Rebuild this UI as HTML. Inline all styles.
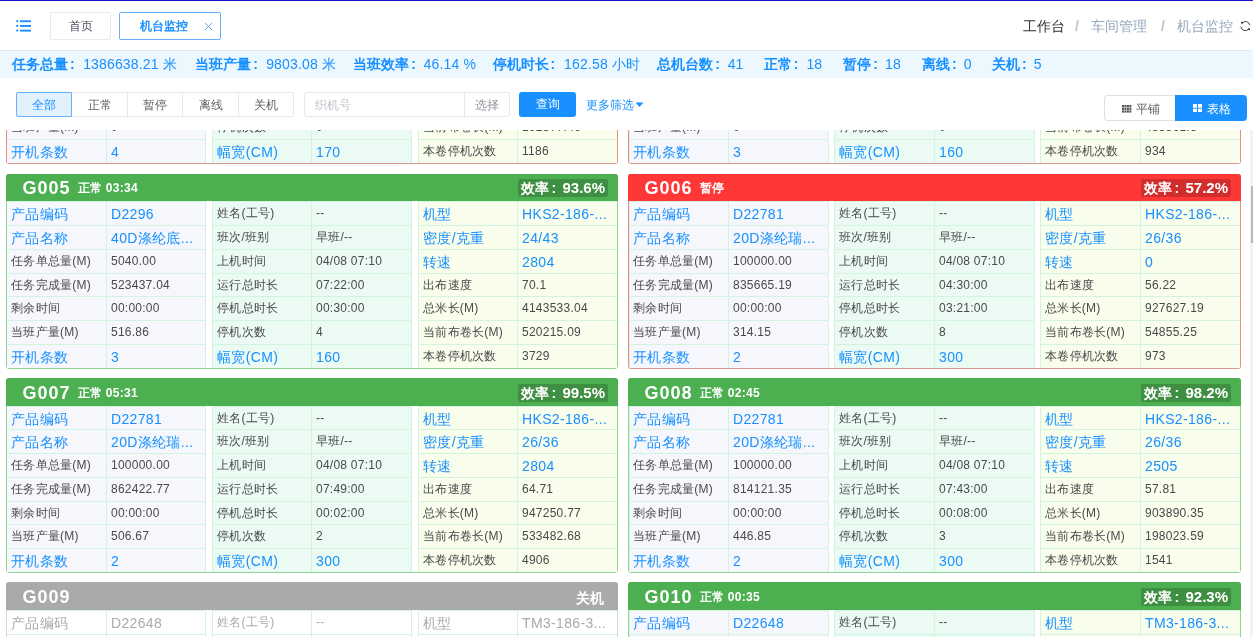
<!DOCTYPE html>
<html><head><meta charset="utf-8"><style>
*{margin:0;padding:0;box-sizing:border-box}
html,body{width:1253px;height:637px;overflow:hidden;background:#fff;font-family:"Liberation Sans",sans-serif;color:#333}
.abs{position:absolute}
.topline{position:absolute;left:0;top:0;width:1253px;height:1px;background:#1a0fd4}
.ham{position:absolute;left:16px;top:19.6px}
.tab{position:absolute;top:12px;height:28px;border:1px solid #e8eaef;border-radius:2px;font-size:12px;line-height:26px;color:#495060;text-align:center}
.tab.t1{left:50px;width:61px}
.tab.t2{left:119px;width:102px;border-color:#64b1ff;color:#1890ff;font-weight:bold;text-align:left;padding-left:20px}
.tab.t2 .x{position:absolute;left:84px;top:9px}
.bc{position:absolute;top:18px;font-size:14px;line-height:16px;white-space:nowrap}
.info{position:absolute;left:0;top:50px;width:1253px;height:28px;border-top:1px solid #e4e7ed;background:#ecf7fe;font-size:14px;line-height:27px;color:#1890ff;white-space:nowrap}
.info span{position:absolute;top:0;letter-spacing:.15px}
.info b{position:absolute;top:0;font-weight:bold}
.info .cl{display:inline-block;width:15px;font-style:normal;padding-left:2px}
.fb{position:absolute;top:92px;height:25px;border:1px solid #e4e7ed;font-size:12px;line-height:25.2px;text-align:center;color:#606266;background:#fff}
.fb.on{background:#e3f0fd;border-color:#64b1ff;color:#1890ff;z-index:2}
.inp{position:absolute;left:304px;top:92px;width:206px;height:25px;border:1px solid #e4e7ed;border-radius:3px;background:#fff;font-size:12px;line-height:25px;color:#c0c4cc}
.btnq{position:absolute;left:519px;top:92px;width:57px;height:25px;border-radius:3px;background:#1890ff;color:#fff;font-size:12px;line-height:25.5px;text-align:center}
.more{position:absolute;left:586px;top:92px;font-size:12px;line-height:26px;color:#1890ff}
.vt{position:absolute;top:95px;height:26px;font-size:12px;line-height:24px;text-align:center}
.content{position:absolute;left:0;top:130px;width:1253px;height:507px;overflow:hidden;will-change:transform}
.sb{position:absolute;left:1250px;top:130px;width:3px;height:507px;background:#f3f3f3}
.sbt{position:absolute;left:1251px;top:186px;width:2px;height:57px;background:#b8b8b8}
.card{position:absolute;border:1px solid #8fd694;border-radius:3px}
.card.red{border-color:#f08a85;border-bottom-color:#d99a8c}
.card.gray{border-color:#d6d6d6}
.hd{position:absolute;left:-1px;top:-1px;right:-1px;background:#4caf50;color:#fff;border-radius:3px 3px 0 0;display:flex;align-items:center;padding-top:1px;white-space:nowrap}
.red .hd{background:#ff3737}
.gray .hd{background:#aaaaaa}
.gid{margin-left:16.5px;font-size:18px;line-height:20px;font-weight:bold;letter-spacing:1px}
.st{margin-left:7px;font-size:12px;line-height:16px;font-weight:bold;letter-spacing:.3px}
.eff{margin-left:auto;margin-right:10px;height:18px;padding:0 3px 0 3.5px;background:rgba(0,0,0,.18);border-radius:2px;font-size:14px;line-height:18px;font-weight:bold}
.rst{margin-left:auto;margin-right:14.5px;font-size:14px;line-height:17px;font-weight:bold;position:relative;top:2px}
.gb{position:absolute}
.g0{background:#f5f7fc}
.g1{background:#ebfbf3}
.g2{background:#f8fdec}
.gray .gb{background:#fff}
.vl{position:absolute;width:1px;background:#d3f3e1}
.hl{position:absolute;height:1px;background:#d3f3e1}
.tx{position:absolute;white-space:nowrap;font-size:12px;color:#4a4a4a;letter-spacing:.25px}
.tx.big{font-size:14px;color:#1890ff;letter-spacing:.35px}
.gray .tx,.gray .tx.big{color:#aaa}
.eff .cl{display:inline-block;width:13px;font-style:normal;padding-left:2px}
.eff b{font-size:15px}

.root{position:absolute;left:0;top:0;width:1253px;height:637px;overflow:hidden;will-change:transform;background:#fff}

</style></head><body><div class="root">
<div class="topline"></div>
<svg class="ham" width="16" height="13" viewBox="0 0 16 13"><g fill="#1890ff"><circle cx="1.2" cy="1.2" r="1.1"/><circle cx="1.2" cy="5.9" r="1.1"/><circle cx="1.2" cy="10.6" r="1.1"/><rect x="4" y="0.3" width="11" height="1.9"/><rect x="4" y="5" width="11" height="1.9"/><rect x="4" y="9.7" width="11" height="1.9"/></g></svg>
<div class="tab t1">首页</div>
<div class="tab t2">机台监控<svg class="x" width="9" height="9" viewBox="0 0 9 9"><path d="M1 1L8 8M8 1L1 8" stroke="#4da3ff" stroke-width="0.9"/></svg></div>
<div class="bc" style="left:1023px;color:#303133">工作台</div>
<div class="bc" style="left:1075px;color:#c0c4cc;font-weight:bold">/</div>
<div class="bc" style="left:1091px;color:#97a8be">车间管理</div>
<div class="bc" style="left:1161px;color:#c0c4cc;font-weight:bold">/</div>
<div class="bc" style="left:1177px;color:#97a8be">机台监控</div>
<svg class="abs" style="left:1240px;top:21px" width="11" height="10" viewBox="0 0 11 10"><path d="M2.3 1.8A4.5 4.5 0 0 1 9.9 4.2" fill="none" stroke="#444" stroke-width="1"/><path d="M0.9 5.6A4.5 4.5 0 0 0 8.7 8.2" fill="none" stroke="#444" stroke-width="1"/><path d="M0.8 0.8L3.6 1.2L1.8 3.4Z M10.2 9.2L7.4 8.8L9.2 6.6Z" fill="#333"/></svg>
<div class="info"><b style="left:12.0px">任务总量<i class="cl">:</i></b><span style="left:83.2px">1386638.21 米</span><b style="left:195.3px">当班产量<i class="cl">:</i></b><span style="left:266.2px">9803.08 米</span><b style="left:353.3px">当班效率<i class="cl">:</i></b><span style="left:423.6px">46.14 %</span><b style="left:492.6px">停机时长<i class="cl">:</i></b><span style="left:564.1px">162.58 小时</span><b style="left:657.3px">总机台数<i class="cl">:</i></b><span style="left:727.7px">41</span><b style="left:763.7px">正常<i class="cl">:</i></b><span style="left:806.4px">18</span><b style="left:843.2px">暂停<i class="cl">:</i></b><span style="left:885.1px">18</span><b style="left:921.9px">离线<i class="cl">:</i></b><span style="left:963.8px">0</span><b style="left:991.9px">关机<i class="cl">:</i></b><span style="left:1033.8px">5</span></div>
<div class="fb on" style="left:16px;width:56px;border-radius:2px 0 0 2px">全部</div>
<div class="fb" style="left:71px;width:57px">正常</div>
<div class="fb" style="left:127px;width:56px">暂停</div>
<div class="fb" style="left:182px;width:57px">离线</div>
<div class="fb" style="left:238px;width:56px;border-radius:0 2px 2px 0">关机</div>
<div class="inp"><span class="abs" style="left:10px">织机号</span><div class="abs" style="left:159px;top:0;width:1px;height:23px;background:#e4e7ed"></div><span class="abs" style="left:170px;color:#909399">选择</span></div>
<div class="btnq">查询</div>
<div class="more">更多筛选<svg width="9" height="6" viewBox="0 0 9 6" style="margin-left:1px;vertical-align:1px"><path d="M0.5 0.5h8L4.5 5z" fill="#1890ff"/></svg></div>
<div class="vt" style="left:1104px;width:72px;border:1px solid #dcdfe6;border-right:0;border-radius:4px 0 0 4px;color:#606266"><svg width="9.5" height="8" viewBox="0 0 9.5 8" style="position:absolute;left:17px;top:8.5px"><g fill="#555"><rect x="0.00" y="0.00" width="2" height="2.2"/><rect x="2.45" y="0.00" width="2" height="2.2"/><rect x="4.90" y="0.00" width="2" height="2.2"/><rect x="7.35" y="0.00" width="2" height="2.2"/><rect x="0.00" y="2.70" width="2" height="2.2"/><rect x="2.45" y="2.70" width="2" height="2.2"/><rect x="4.90" y="2.70" width="2" height="2.2"/><rect x="7.35" y="2.70" width="2" height="2.2"/><rect x="0.00" y="5.40" width="2" height="2.2"/><rect x="2.45" y="5.40" width="2" height="2.2"/><rect x="4.90" y="5.40" width="2" height="2.2"/><rect x="7.35" y="5.40" width="2" height="2.2"/></g></svg><span style="position:absolute;left:31px;top:0.5px">平铺</span></div><div class="vt" style="left:1175px;width:72px;background:#1890ff;border-radius:0 4px 4px 0;color:#fff"><svg width="9" height="8.5" viewBox="0 0 9 8.5" style="position:absolute;left:17.5px;top:8.5px"><g fill="#fff"><rect x="0" y="0" width="4" height="3.8"/><rect x="5" y="0" width="4" height="3.8"/><rect x="0" y="4.7" width="4" height="3.8"/><rect x="5" y="4.7" width="4" height="3.8"/></g></svg><span style="position:absolute;left:32px;top:1.5px">表格</span></div>
<div class="content"><div class="card red" style="left:6px;top:-161px;width:612px;height:195px"><div class="hd" style="height:27px"><span class="gid">G003</span><span class="st">暂停</span><span class="eff">效率<i class="cl">:</i><b>50.1%</b></span></div><div class="gb g0" style="left:0px;width:199px;top:26px;height:167px"></div><div class="gb g1" style="left:205px;width:200px;top:26px;height:167px"></div><div class="gb g2" style="left:411px;width:199px;top:26px;height:167px"></div><div class="vl" style="left:99px;top:26px;height:167px"></div><div class="vl" style="left:198px;top:26px;height:167px"></div><div class="vl" style="left:304px;top:26px;height:167px"></div><div class="vl" style="left:205px;top:26px;height:167px"></div><div class="vl" style="left:404px;top:26px;height:167px"></div><div class="vl" style="left:510px;top:26px;height:167px"></div><div class="vl" style="left:411px;top:26px;height:167px"></div><div class="hl" style="left:0px;width:199px;top:26px"></div><div class="hl" style="left:205px;width:200px;top:26px"></div><div class="hl" style="left:411px;width:199px;top:26px"></div><div class="hl" style="left:0px;width:199px;top:49px"></div><div class="hl" style="left:205px;width:200px;top:49px"></div><div class="hl" style="left:411px;width:199px;top:49px"></div><div class="hl" style="left:0px;width:199px;top:73px"></div><div class="hl" style="left:205px;width:200px;top:73px"></div><div class="hl" style="left:411px;width:199px;top:73px"></div><div class="hl" style="left:0px;width:199px;top:97px"></div><div class="hl" style="left:205px;width:200px;top:97px"></div><div class="hl" style="left:411px;width:199px;top:97px"></div><div class="hl" style="left:0px;width:199px;top:121px"></div><div class="hl" style="left:205px;width:200px;top:121px"></div><div class="hl" style="left:411px;width:199px;top:121px"></div><div class="hl" style="left:0px;width:199px;top:145px"></div><div class="hl" style="left:205px;width:200px;top:145px"></div><div class="hl" style="left:411px;width:199px;top:145px"></div><div class="hl" style="left:0px;width:199px;top:169px"></div><div class="hl" style="left:205px;width:200px;top:169px"></div><div class="hl" style="left:411px;width:199px;top:169px"></div><span class="tx big" style="left:4px;top:27.6px;line-height:22px">产品编码</span><span class="tx big" style="left:104px;top:27.6px;line-height:22px">D22781</span><span class="tx big" style="left:4px;top:50.6px;line-height:23px">产品名称</span><span class="tx big" style="left:104px;top:50.6px;line-height:23px">20D涤纶瑞...</span><span class="tx " style="left:4px;top:73.6px;line-height:23px">任务单总量(M)</span><span class="tx " style="left:104px;top:73.6px;line-height:23px">100000.00</span><span class="tx " style="left:4px;top:97.6px;line-height:23px">任务完成量(M)</span><span class="tx " style="left:104px;top:97.6px;line-height:23px">835665.19</span><span class="tx " style="left:4px;top:121.6px;line-height:23px">剩余时间</span><span class="tx " style="left:104px;top:121.6px;line-height:23px">00:00:00</span><span class="tx " style="left:4px;top:145.6px;line-height:23px">当班产量(M)</span><span class="tx " style="left:104px;top:145.6px;line-height:23px">0</span><span class="tx big" style="left:4px;top:170.6px;line-height:23px">开机条数</span><span class="tx big" style="left:104px;top:170.6px;line-height:23px">4</span><span class="tx " style="left:210px;top:26.6px;line-height:22px">姓名(工号)</span><span class="tx " style="left:309px;top:26.6px;line-height:22px">--</span><span class="tx " style="left:210px;top:49.6px;line-height:23px">班次/班别</span><span class="tx " style="left:309px;top:49.6px;line-height:23px">早班/--</span><span class="tx " style="left:210px;top:73.6px;line-height:23px">上机时间</span><span class="tx " style="left:309px;top:73.6px;line-height:23px">04/08 07:10</span><span class="tx " style="left:210px;top:97.6px;line-height:23px">运行总时长</span><span class="tx " style="left:309px;top:97.6px;line-height:23px">04:30:00</span><span class="tx " style="left:210px;top:121.6px;line-height:23px">停机总时长</span><span class="tx " style="left:309px;top:121.6px;line-height:23px">03:21:00</span><span class="tx " style="left:210px;top:145.6px;line-height:23px">停机次数</span><span class="tx " style="left:309px;top:145.6px;line-height:23px">0</span><span class="tx big" style="left:210px;top:170.6px;line-height:23px">幅宽(CM)</span><span class="tx big" style="left:309px;top:170.6px;line-height:23px">170</span><span class="tx big" style="left:416px;top:27.6px;line-height:22px">机型</span><span class="tx big" style="left:515px;top:27.6px;line-height:22px">HKS2-186-...</span><span class="tx big" style="left:416px;top:50.6px;line-height:23px">密度/克重</span><span class="tx big" style="left:515px;top:50.6px;line-height:23px">26/36</span><span class="tx big" style="left:416px;top:74.6px;line-height:23px">转速</span><span class="tx big" style="left:515px;top:74.6px;line-height:23px">0</span><span class="tx " style="left:416px;top:97.6px;line-height:23px">出布速度</span><span class="tx " style="left:515px;top:97.6px;line-height:23px">56.22</span><span class="tx " style="left:416px;top:121.6px;line-height:23px">总米长(M)</span><span class="tx " style="left:515px;top:121.6px;line-height:23px">927627.19</span><span class="tx " style="left:416px;top:145.6px;line-height:23px">当前布卷长(M)</span><span class="tx " style="left:515px;top:145.6px;line-height:23px">192377.46</span><span class="tx " style="left:416px;top:169.6px;line-height:23px">本卷停机次数</span><span class="tx " style="left:515px;top:169.6px;line-height:23px">1186</span></div><div class="card red" style="left:628px;top:-161px;width:613px;height:195px"><div class="hd" style="height:27px"><span class="gid">G004</span><span class="st">暂停</span><span class="eff">效率<i class="cl">:</i><b>50.1%</b></span></div><div class="gb g0" style="left:0px;width:200px;top:26px;height:167px"></div><div class="gb g1" style="left:205px;width:201px;top:26px;height:167px"></div><div class="gb g2" style="left:411px;width:200px;top:26px;height:167px"></div><div class="vl" style="left:99px;top:26px;height:167px"></div><div class="vl" style="left:0px;top:26px;height:167px"></div><div class="vl" style="left:199px;top:26px;height:167px"></div><div class="vl" style="left:305px;top:26px;height:167px"></div><div class="vl" style="left:205px;top:26px;height:167px"></div><div class="vl" style="left:405px;top:26px;height:167px"></div><div class="vl" style="left:511px;top:26px;height:167px"></div><div class="vl" style="left:411px;top:26px;height:167px"></div><div class="hl" style="left:0px;width:200px;top:26px"></div><div class="hl" style="left:205px;width:201px;top:26px"></div><div class="hl" style="left:411px;width:200px;top:26px"></div><div class="hl" style="left:0px;width:200px;top:49px"></div><div class="hl" style="left:205px;width:201px;top:49px"></div><div class="hl" style="left:411px;width:200px;top:49px"></div><div class="hl" style="left:0px;width:200px;top:73px"></div><div class="hl" style="left:205px;width:201px;top:73px"></div><div class="hl" style="left:411px;width:200px;top:73px"></div><div class="hl" style="left:0px;width:200px;top:97px"></div><div class="hl" style="left:205px;width:201px;top:97px"></div><div class="hl" style="left:411px;width:200px;top:97px"></div><div class="hl" style="left:0px;width:200px;top:121px"></div><div class="hl" style="left:205px;width:201px;top:121px"></div><div class="hl" style="left:411px;width:200px;top:121px"></div><div class="hl" style="left:0px;width:200px;top:145px"></div><div class="hl" style="left:205px;width:201px;top:145px"></div><div class="hl" style="left:411px;width:200px;top:145px"></div><div class="hl" style="left:0px;width:200px;top:169px"></div><div class="hl" style="left:205px;width:201px;top:169px"></div><div class="hl" style="left:411px;width:200px;top:169px"></div><span class="tx big" style="left:4px;top:27.6px;line-height:22px">产品编码</span><span class="tx big" style="left:104px;top:27.6px;line-height:22px">D22781</span><span class="tx big" style="left:4px;top:50.6px;line-height:23px">产品名称</span><span class="tx big" style="left:104px;top:50.6px;line-height:23px">20D涤纶瑞...</span><span class="tx " style="left:4px;top:73.6px;line-height:23px">任务单总量(M)</span><span class="tx " style="left:104px;top:73.6px;line-height:23px">100000.00</span><span class="tx " style="left:4px;top:97.6px;line-height:23px">任务完成量(M)</span><span class="tx " style="left:104px;top:97.6px;line-height:23px">835665.19</span><span class="tx " style="left:4px;top:121.6px;line-height:23px">剩余时间</span><span class="tx " style="left:104px;top:121.6px;line-height:23px">00:00:00</span><span class="tx " style="left:4px;top:145.6px;line-height:23px">当班产量(M)</span><span class="tx " style="left:104px;top:145.6px;line-height:23px">0</span><span class="tx big" style="left:4px;top:170.6px;line-height:23px">开机条数</span><span class="tx big" style="left:104px;top:170.6px;line-height:23px">3</span><span class="tx " style="left:210px;top:26.6px;line-height:22px">姓名(工号)</span><span class="tx " style="left:310px;top:26.6px;line-height:22px">--</span><span class="tx " style="left:210px;top:49.6px;line-height:23px">班次/班别</span><span class="tx " style="left:310px;top:49.6px;line-height:23px">早班/--</span><span class="tx " style="left:210px;top:73.6px;line-height:23px">上机时间</span><span class="tx " style="left:310px;top:73.6px;line-height:23px">04/08 07:10</span><span class="tx " style="left:210px;top:97.6px;line-height:23px">运行总时长</span><span class="tx " style="left:310px;top:97.6px;line-height:23px">04:30:00</span><span class="tx " style="left:210px;top:121.6px;line-height:23px">停机总时长</span><span class="tx " style="left:310px;top:121.6px;line-height:23px">03:21:00</span><span class="tx " style="left:210px;top:145.6px;line-height:23px">停机次数</span><span class="tx " style="left:310px;top:145.6px;line-height:23px">0</span><span class="tx big" style="left:210px;top:170.6px;line-height:23px">幅宽(CM)</span><span class="tx big" style="left:310px;top:170.6px;line-height:23px">160</span><span class="tx big" style="left:416px;top:27.6px;line-height:22px">机型</span><span class="tx big" style="left:516px;top:27.6px;line-height:22px">HKS2-186-...</span><span class="tx big" style="left:416px;top:50.6px;line-height:23px">密度/克重</span><span class="tx big" style="left:516px;top:50.6px;line-height:23px">26/36</span><span class="tx big" style="left:416px;top:74.6px;line-height:23px">转速</span><span class="tx big" style="left:516px;top:74.6px;line-height:23px">0</span><span class="tx " style="left:416px;top:97.6px;line-height:23px">出布速度</span><span class="tx " style="left:516px;top:97.6px;line-height:23px">56.22</span><span class="tx " style="left:416px;top:121.6px;line-height:23px">总米长(M)</span><span class="tx " style="left:516px;top:121.6px;line-height:23px">927627.19</span><span class="tx " style="left:416px;top:145.6px;line-height:23px">当前布卷长(M)</span><span class="tx " style="left:516px;top:145.6px;line-height:23px">488861.5</span><span class="tx " style="left:416px;top:169.6px;line-height:23px">本卷停机次数</span><span class="tx " style="left:516px;top:169.6px;line-height:23px">934</span></div><div class="card green" style="left:6px;top:44px;width:612px;height:195px"><div class="hd" style="height:27px"><span class="gid">G005</span><span class="st">正常 03:34</span><span class="eff">效率<i class="cl">:</i><b>93.6%</b></span></div><div class="gb g0" style="left:0px;width:199px;top:26px;height:167px"></div><div class="gb g1" style="left:205px;width:200px;top:26px;height:167px"></div><div class="gb g2" style="left:411px;width:199px;top:26px;height:167px"></div><div class="vl" style="left:99px;top:26px;height:167px"></div><div class="vl" style="left:198px;top:26px;height:167px"></div><div class="vl" style="left:304px;top:26px;height:167px"></div><div class="vl" style="left:205px;top:26px;height:167px"></div><div class="vl" style="left:404px;top:26px;height:167px"></div><div class="vl" style="left:510px;top:26px;height:167px"></div><div class="vl" style="left:411px;top:26px;height:167px"></div><div class="hl" style="left:0px;width:199px;top:26px"></div><div class="hl" style="left:205px;width:200px;top:26px"></div><div class="hl" style="left:411px;width:199px;top:26px"></div><div class="hl" style="left:0px;width:199px;top:50px"></div><div class="hl" style="left:205px;width:200px;top:50px"></div><div class="hl" style="left:411px;width:199px;top:50px"></div><div class="hl" style="left:0px;width:199px;top:74px"></div><div class="hl" style="left:205px;width:200px;top:74px"></div><div class="hl" style="left:411px;width:199px;top:74px"></div><div class="hl" style="left:0px;width:199px;top:98px"></div><div class="hl" style="left:205px;width:200px;top:98px"></div><div class="hl" style="left:411px;width:199px;top:98px"></div><div class="hl" style="left:0px;width:199px;top:121px"></div><div class="hl" style="left:205px;width:200px;top:121px"></div><div class="hl" style="left:411px;width:199px;top:121px"></div><div class="hl" style="left:0px;width:199px;top:145px"></div><div class="hl" style="left:205px;width:200px;top:145px"></div><div class="hl" style="left:411px;width:199px;top:145px"></div><div class="hl" style="left:0px;width:199px;top:169px"></div><div class="hl" style="left:205px;width:200px;top:169px"></div><div class="hl" style="left:411px;width:199px;top:169px"></div><span class="tx big" style="left:4px;top:27.6px;line-height:23px">产品编码</span><span class="tx big" style="left:104px;top:27.6px;line-height:23px">D2296</span><span class="tx big" style="left:4px;top:51.6px;line-height:23px">产品名称</span><span class="tx big" style="left:104px;top:51.6px;line-height:23px">40D涤纶底...</span><span class="tx " style="left:4px;top:74.6px;line-height:23px">任务单总量(M)</span><span class="tx " style="left:104px;top:74.6px;line-height:23px">5040.00</span><span class="tx " style="left:4px;top:98.6px;line-height:22px">任务完成量(M)</span><span class="tx " style="left:104px;top:98.6px;line-height:22px">523437.04</span><span class="tx " style="left:4px;top:121.6px;line-height:23px">剩余时间</span><span class="tx " style="left:104px;top:121.6px;line-height:23px">00:00:00</span><span class="tx " style="left:4px;top:145.6px;line-height:23px">当班产量(M)</span><span class="tx " style="left:104px;top:145.6px;line-height:23px">516.86</span><span class="tx big" style="left:4px;top:170.6px;line-height:23px">开机条数</span><span class="tx big" style="left:104px;top:170.6px;line-height:23px">3</span><span class="tx " style="left:210px;top:26.6px;line-height:23px">姓名(工号)</span><span class="tx " style="left:309px;top:26.6px;line-height:23px">--</span><span class="tx " style="left:210px;top:50.6px;line-height:23px">班次/班别</span><span class="tx " style="left:309px;top:50.6px;line-height:23px">早班/--</span><span class="tx " style="left:210px;top:74.6px;line-height:23px">上机时间</span><span class="tx " style="left:309px;top:74.6px;line-height:23px">04/08 07:10</span><span class="tx " style="left:210px;top:98.6px;line-height:22px">运行总时长</span><span class="tx " style="left:309px;top:98.6px;line-height:22px">07:22:00</span><span class="tx " style="left:210px;top:121.6px;line-height:23px">停机总时长</span><span class="tx " style="left:309px;top:121.6px;line-height:23px">00:30:00</span><span class="tx " style="left:210px;top:145.6px;line-height:23px">停机次数</span><span class="tx " style="left:309px;top:145.6px;line-height:23px">4</span><span class="tx big" style="left:210px;top:170.6px;line-height:23px">幅宽(CM)</span><span class="tx big" style="left:309px;top:170.6px;line-height:23px">160</span><span class="tx big" style="left:416px;top:27.6px;line-height:23px">机型</span><span class="tx big" style="left:515px;top:27.6px;line-height:23px">HKS2-186-...</span><span class="tx big" style="left:416px;top:51.6px;line-height:23px">密度/克重</span><span class="tx big" style="left:515px;top:51.6px;line-height:23px">24/43</span><span class="tx big" style="left:416px;top:75.6px;line-height:23px">转速</span><span class="tx big" style="left:515px;top:75.6px;line-height:23px">2804</span><span class="tx " style="left:416px;top:98.6px;line-height:22px">出布速度</span><span class="tx " style="left:515px;top:98.6px;line-height:22px">70.1</span><span class="tx " style="left:416px;top:121.6px;line-height:23px">总米长(M)</span><span class="tx " style="left:515px;top:121.6px;line-height:23px">4143533.04</span><span class="tx " style="left:416px;top:145.6px;line-height:23px">当前布卷长(M)</span><span class="tx " style="left:515px;top:145.6px;line-height:23px">520215.09</span><span class="tx " style="left:416px;top:169.6px;line-height:23px">本卷停机次数</span><span class="tx " style="left:515px;top:169.6px;line-height:23px">3729</span></div><div class="card red" style="left:628px;top:44px;width:613px;height:195px"><div class="hd" style="height:27px"><span class="gid">G006</span><span class="st">暂停</span><span class="eff">效率<i class="cl">:</i><b>57.2%</b></span></div><div class="gb g0" style="left:0px;width:200px;top:26px;height:167px"></div><div class="gb g1" style="left:205px;width:201px;top:26px;height:167px"></div><div class="gb g2" style="left:411px;width:200px;top:26px;height:167px"></div><div class="vl" style="left:99px;top:26px;height:167px"></div><div class="vl" style="left:0px;top:26px;height:167px"></div><div class="vl" style="left:199px;top:26px;height:167px"></div><div class="vl" style="left:305px;top:26px;height:167px"></div><div class="vl" style="left:205px;top:26px;height:167px"></div><div class="vl" style="left:405px;top:26px;height:167px"></div><div class="vl" style="left:511px;top:26px;height:167px"></div><div class="vl" style="left:411px;top:26px;height:167px"></div><div class="hl" style="left:0px;width:200px;top:26px"></div><div class="hl" style="left:205px;width:201px;top:26px"></div><div class="hl" style="left:411px;width:200px;top:26px"></div><div class="hl" style="left:0px;width:200px;top:50px"></div><div class="hl" style="left:205px;width:201px;top:50px"></div><div class="hl" style="left:411px;width:200px;top:50px"></div><div class="hl" style="left:0px;width:200px;top:74px"></div><div class="hl" style="left:205px;width:201px;top:74px"></div><div class="hl" style="left:411px;width:200px;top:74px"></div><div class="hl" style="left:0px;width:200px;top:98px"></div><div class="hl" style="left:205px;width:201px;top:98px"></div><div class="hl" style="left:411px;width:200px;top:98px"></div><div class="hl" style="left:0px;width:200px;top:121px"></div><div class="hl" style="left:205px;width:201px;top:121px"></div><div class="hl" style="left:411px;width:200px;top:121px"></div><div class="hl" style="left:0px;width:200px;top:145px"></div><div class="hl" style="left:205px;width:201px;top:145px"></div><div class="hl" style="left:411px;width:200px;top:145px"></div><div class="hl" style="left:0px;width:200px;top:169px"></div><div class="hl" style="left:205px;width:201px;top:169px"></div><div class="hl" style="left:411px;width:200px;top:169px"></div><span class="tx big" style="left:4px;top:27.6px;line-height:23px">产品编码</span><span class="tx big" style="left:104px;top:27.6px;line-height:23px">D22781</span><span class="tx big" style="left:4px;top:51.6px;line-height:23px">产品名称</span><span class="tx big" style="left:104px;top:51.6px;line-height:23px">20D涤纶瑞...</span><span class="tx " style="left:4px;top:74.6px;line-height:23px">任务单总量(M)</span><span class="tx " style="left:104px;top:74.6px;line-height:23px">100000.00</span><span class="tx " style="left:4px;top:98.6px;line-height:22px">任务完成量(M)</span><span class="tx " style="left:104px;top:98.6px;line-height:22px">835665.19</span><span class="tx " style="left:4px;top:121.6px;line-height:23px">剩余时间</span><span class="tx " style="left:104px;top:121.6px;line-height:23px">00:00:00</span><span class="tx " style="left:4px;top:145.6px;line-height:23px">当班产量(M)</span><span class="tx " style="left:104px;top:145.6px;line-height:23px">314.15</span><span class="tx big" style="left:4px;top:170.6px;line-height:23px">开机条数</span><span class="tx big" style="left:104px;top:170.6px;line-height:23px">2</span><span class="tx " style="left:210px;top:26.6px;line-height:23px">姓名(工号)</span><span class="tx " style="left:310px;top:26.6px;line-height:23px">--</span><span class="tx " style="left:210px;top:50.6px;line-height:23px">班次/班别</span><span class="tx " style="left:310px;top:50.6px;line-height:23px">早班/--</span><span class="tx " style="left:210px;top:74.6px;line-height:23px">上机时间</span><span class="tx " style="left:310px;top:74.6px;line-height:23px">04/08 07:10</span><span class="tx " style="left:210px;top:98.6px;line-height:22px">运行总时长</span><span class="tx " style="left:310px;top:98.6px;line-height:22px">04:30:00</span><span class="tx " style="left:210px;top:121.6px;line-height:23px">停机总时长</span><span class="tx " style="left:310px;top:121.6px;line-height:23px">03:21:00</span><span class="tx " style="left:210px;top:145.6px;line-height:23px">停机次数</span><span class="tx " style="left:310px;top:145.6px;line-height:23px">8</span><span class="tx big" style="left:210px;top:170.6px;line-height:23px">幅宽(CM)</span><span class="tx big" style="left:310px;top:170.6px;line-height:23px">300</span><span class="tx big" style="left:416px;top:27.6px;line-height:23px">机型</span><span class="tx big" style="left:516px;top:27.6px;line-height:23px">HKS2-186-...</span><span class="tx big" style="left:416px;top:51.6px;line-height:23px">密度/克重</span><span class="tx big" style="left:516px;top:51.6px;line-height:23px">26/36</span><span class="tx big" style="left:416px;top:75.6px;line-height:23px">转速</span><span class="tx big" style="left:516px;top:75.6px;line-height:23px">0</span><span class="tx " style="left:416px;top:98.6px;line-height:22px">出布速度</span><span class="tx " style="left:516px;top:98.6px;line-height:22px">56.22</span><span class="tx " style="left:416px;top:121.6px;line-height:23px">总米长(M)</span><span class="tx " style="left:516px;top:121.6px;line-height:23px">927627.19</span><span class="tx " style="left:416px;top:145.6px;line-height:23px">当前布卷长(M)</span><span class="tx " style="left:516px;top:145.6px;line-height:23px">54855.25</span><span class="tx " style="left:416px;top:169.6px;line-height:23px">本卷停机次数</span><span class="tx " style="left:516px;top:169.6px;line-height:23px">973</span></div><div class="card green" style="left:6px;top:248px;width:612px;height:195px"><div class="hd" style="height:28px"><span class="gid">G007</span><span class="st">正常 05:31</span><span class="eff">效率<i class="cl">:</i><b>99.5%</b></span></div><div class="gb g0" style="left:0px;width:199px;top:27px;height:166px"></div><div class="gb g1" style="left:205px;width:200px;top:27px;height:166px"></div><div class="gb g2" style="left:411px;width:199px;top:27px;height:166px"></div><div class="vl" style="left:99px;top:27px;height:166px"></div><div class="vl" style="left:198px;top:27px;height:166px"></div><div class="vl" style="left:304px;top:27px;height:166px"></div><div class="vl" style="left:205px;top:27px;height:166px"></div><div class="vl" style="left:404px;top:27px;height:166px"></div><div class="vl" style="left:510px;top:27px;height:166px"></div><div class="vl" style="left:411px;top:27px;height:166px"></div><div class="hl" style="left:0px;width:199px;top:27px"></div><div class="hl" style="left:205px;width:200px;top:27px"></div><div class="hl" style="left:411px;width:199px;top:27px"></div><div class="hl" style="left:0px;width:199px;top:50px"></div><div class="hl" style="left:205px;width:200px;top:50px"></div><div class="hl" style="left:411px;width:199px;top:50px"></div><div class="hl" style="left:0px;width:199px;top:74px"></div><div class="hl" style="left:205px;width:200px;top:74px"></div><div class="hl" style="left:411px;width:199px;top:74px"></div><div class="hl" style="left:0px;width:199px;top:98px"></div><div class="hl" style="left:205px;width:200px;top:98px"></div><div class="hl" style="left:411px;width:199px;top:98px"></div><div class="hl" style="left:0px;width:199px;top:122px"></div><div class="hl" style="left:205px;width:200px;top:122px"></div><div class="hl" style="left:411px;width:199px;top:122px"></div><div class="hl" style="left:0px;width:199px;top:145px"></div><div class="hl" style="left:205px;width:200px;top:145px"></div><div class="hl" style="left:411px;width:199px;top:145px"></div><div class="hl" style="left:0px;width:199px;top:169px"></div><div class="hl" style="left:205px;width:200px;top:169px"></div><div class="hl" style="left:411px;width:199px;top:169px"></div><span class="tx big" style="left:4px;top:28.6px;line-height:22px">产品编码</span><span class="tx big" style="left:104px;top:28.6px;line-height:22px">D22781</span><span class="tx big" style="left:4px;top:51.6px;line-height:23px">产品名称</span><span class="tx big" style="left:104px;top:51.6px;line-height:23px">20D涤纶瑞...</span><span class="tx " style="left:4px;top:74.6px;line-height:23px">任务单总量(M)</span><span class="tx " style="left:104px;top:74.6px;line-height:23px">100000.00</span><span class="tx " style="left:4px;top:98.6px;line-height:23px">任务完成量(M)</span><span class="tx " style="left:104px;top:98.6px;line-height:23px">862422.77</span><span class="tx " style="left:4px;top:122.6px;line-height:22px">剩余时间</span><span class="tx " style="left:104px;top:122.6px;line-height:22px">00:00:00</span><span class="tx " style="left:4px;top:145.6px;line-height:23px">当班产量(M)</span><span class="tx " style="left:104px;top:145.6px;line-height:23px">506.67</span><span class="tx big" style="left:4px;top:170.6px;line-height:23px">开机条数</span><span class="tx big" style="left:104px;top:170.6px;line-height:23px">2</span><span class="tx " style="left:210px;top:27.6px;line-height:22px">姓名(工号)</span><span class="tx " style="left:309px;top:27.6px;line-height:22px">--</span><span class="tx " style="left:210px;top:50.6px;line-height:23px">班次/班别</span><span class="tx " style="left:309px;top:50.6px;line-height:23px">早班/--</span><span class="tx " style="left:210px;top:74.6px;line-height:23px">上机时间</span><span class="tx " style="left:309px;top:74.6px;line-height:23px">04/08 07:10</span><span class="tx " style="left:210px;top:98.6px;line-height:23px">运行总时长</span><span class="tx " style="left:309px;top:98.6px;line-height:23px">07:49:00</span><span class="tx " style="left:210px;top:122.6px;line-height:22px">停机总时长</span><span class="tx " style="left:309px;top:122.6px;line-height:22px">00:02:00</span><span class="tx " style="left:210px;top:145.6px;line-height:23px">停机次数</span><span class="tx " style="left:309px;top:145.6px;line-height:23px">2</span><span class="tx big" style="left:210px;top:170.6px;line-height:23px">幅宽(CM)</span><span class="tx big" style="left:309px;top:170.6px;line-height:23px">300</span><span class="tx big" style="left:416px;top:28.6px;line-height:22px">机型</span><span class="tx big" style="left:515px;top:28.6px;line-height:22px">HKS2-186-...</span><span class="tx big" style="left:416px;top:51.6px;line-height:23px">密度/克重</span><span class="tx big" style="left:515px;top:51.6px;line-height:23px">26/36</span><span class="tx big" style="left:416px;top:75.6px;line-height:23px">转速</span><span class="tx big" style="left:515px;top:75.6px;line-height:23px">2804</span><span class="tx " style="left:416px;top:98.6px;line-height:23px">出布速度</span><span class="tx " style="left:515px;top:98.6px;line-height:23px">64.71</span><span class="tx " style="left:416px;top:122.6px;line-height:22px">总米长(M)</span><span class="tx " style="left:515px;top:122.6px;line-height:22px">947250.77</span><span class="tx " style="left:416px;top:145.6px;line-height:23px">当前布卷长(M)</span><span class="tx " style="left:515px;top:145.6px;line-height:23px">533482.68</span><span class="tx " style="left:416px;top:169.6px;line-height:23px">本卷停机次数</span><span class="tx " style="left:515px;top:169.6px;line-height:23px">4906</span></div><div class="card green" style="left:628px;top:248px;width:613px;height:195px"><div class="hd" style="height:28px"><span class="gid">G008</span><span class="st">正常 02:45</span><span class="eff">效率<i class="cl">:</i><b>98.2%</b></span></div><div class="gb g0" style="left:0px;width:200px;top:27px;height:166px"></div><div class="gb g1" style="left:205px;width:201px;top:27px;height:166px"></div><div class="gb g2" style="left:411px;width:200px;top:27px;height:166px"></div><div class="vl" style="left:99px;top:27px;height:166px"></div><div class="vl" style="left:0px;top:27px;height:166px"></div><div class="vl" style="left:199px;top:27px;height:166px"></div><div class="vl" style="left:305px;top:27px;height:166px"></div><div class="vl" style="left:205px;top:27px;height:166px"></div><div class="vl" style="left:405px;top:27px;height:166px"></div><div class="vl" style="left:511px;top:27px;height:166px"></div><div class="vl" style="left:411px;top:27px;height:166px"></div><div class="hl" style="left:0px;width:200px;top:27px"></div><div class="hl" style="left:205px;width:201px;top:27px"></div><div class="hl" style="left:411px;width:200px;top:27px"></div><div class="hl" style="left:0px;width:200px;top:50px"></div><div class="hl" style="left:205px;width:201px;top:50px"></div><div class="hl" style="left:411px;width:200px;top:50px"></div><div class="hl" style="left:0px;width:200px;top:74px"></div><div class="hl" style="left:205px;width:201px;top:74px"></div><div class="hl" style="left:411px;width:200px;top:74px"></div><div class="hl" style="left:0px;width:200px;top:98px"></div><div class="hl" style="left:205px;width:201px;top:98px"></div><div class="hl" style="left:411px;width:200px;top:98px"></div><div class="hl" style="left:0px;width:200px;top:122px"></div><div class="hl" style="left:205px;width:201px;top:122px"></div><div class="hl" style="left:411px;width:200px;top:122px"></div><div class="hl" style="left:0px;width:200px;top:145px"></div><div class="hl" style="left:205px;width:201px;top:145px"></div><div class="hl" style="left:411px;width:200px;top:145px"></div><div class="hl" style="left:0px;width:200px;top:169px"></div><div class="hl" style="left:205px;width:201px;top:169px"></div><div class="hl" style="left:411px;width:200px;top:169px"></div><span class="tx big" style="left:4px;top:28.6px;line-height:22px">产品编码</span><span class="tx big" style="left:104px;top:28.6px;line-height:22px">D22781</span><span class="tx big" style="left:4px;top:51.6px;line-height:23px">产品名称</span><span class="tx big" style="left:104px;top:51.6px;line-height:23px">20D涤纶瑞...</span><span class="tx " style="left:4px;top:74.6px;line-height:23px">任务单总量(M)</span><span class="tx " style="left:104px;top:74.6px;line-height:23px">100000.00</span><span class="tx " style="left:4px;top:98.6px;line-height:23px">任务完成量(M)</span><span class="tx " style="left:104px;top:98.6px;line-height:23px">814121.35</span><span class="tx " style="left:4px;top:122.6px;line-height:22px">剩余时间</span><span class="tx " style="left:104px;top:122.6px;line-height:22px">00:00:00</span><span class="tx " style="left:4px;top:145.6px;line-height:23px">当班产量(M)</span><span class="tx " style="left:104px;top:145.6px;line-height:23px">446.85</span><span class="tx big" style="left:4px;top:170.6px;line-height:23px">开机条数</span><span class="tx big" style="left:104px;top:170.6px;line-height:23px">2</span><span class="tx " style="left:210px;top:27.6px;line-height:22px">姓名(工号)</span><span class="tx " style="left:310px;top:27.6px;line-height:22px">--</span><span class="tx " style="left:210px;top:50.6px;line-height:23px">班次/班别</span><span class="tx " style="left:310px;top:50.6px;line-height:23px">早班/--</span><span class="tx " style="left:210px;top:74.6px;line-height:23px">上机时间</span><span class="tx " style="left:310px;top:74.6px;line-height:23px">04/08 07:10</span><span class="tx " style="left:210px;top:98.6px;line-height:23px">运行总时长</span><span class="tx " style="left:310px;top:98.6px;line-height:23px">07:43:00</span><span class="tx " style="left:210px;top:122.6px;line-height:22px">停机总时长</span><span class="tx " style="left:310px;top:122.6px;line-height:22px">00:08:00</span><span class="tx " style="left:210px;top:145.6px;line-height:23px">停机次数</span><span class="tx " style="left:310px;top:145.6px;line-height:23px">3</span><span class="tx big" style="left:210px;top:170.6px;line-height:23px">幅宽(CM)</span><span class="tx big" style="left:310px;top:170.6px;line-height:23px">300</span><span class="tx big" style="left:416px;top:28.6px;line-height:22px">机型</span><span class="tx big" style="left:516px;top:28.6px;line-height:22px">HKS2-186-...</span><span class="tx big" style="left:416px;top:51.6px;line-height:23px">密度/克重</span><span class="tx big" style="left:516px;top:51.6px;line-height:23px">26/36</span><span class="tx big" style="left:416px;top:75.6px;line-height:23px">转速</span><span class="tx big" style="left:516px;top:75.6px;line-height:23px">2505</span><span class="tx " style="left:416px;top:98.6px;line-height:23px">出布速度</span><span class="tx " style="left:516px;top:98.6px;line-height:23px">57.81</span><span class="tx " style="left:416px;top:122.6px;line-height:22px">总米长(M)</span><span class="tx " style="left:516px;top:122.6px;line-height:22px">903890.35</span><span class="tx " style="left:416px;top:145.6px;line-height:23px">当前布卷长(M)</span><span class="tx " style="left:516px;top:145.6px;line-height:23px">198023.59</span><span class="tx " style="left:416px;top:169.6px;line-height:23px">本卷停机次数</span><span class="tx " style="left:516px;top:169.6px;line-height:23px">1541</span></div><div class="card gray" style="left:6px;top:452px;width:612px;height:197px"><div class="hd" style="height:28px"><span class="gid">G009</span><span class="rst">关机</span></div><div class="gb g0" style="left:0px;width:199px;top:27px;height:168px"></div><div class="gb g1" style="left:205px;width:200px;top:27px;height:168px"></div><div class="gb g2" style="left:411px;width:199px;top:27px;height:168px"></div><div class="vl" style="left:99px;top:27px;height:168px"></div><div class="vl" style="left:198px;top:27px;height:168px"></div><div class="vl" style="left:304px;top:27px;height:168px"></div><div class="vl" style="left:205px;top:27px;height:168px"></div><div class="vl" style="left:404px;top:27px;height:168px"></div><div class="vl" style="left:510px;top:27px;height:168px"></div><div class="vl" style="left:411px;top:27px;height:168px"></div><div class="hl" style="left:0px;width:199px;top:27px"></div><div class="hl" style="left:205px;width:200px;top:27px"></div><div class="hl" style="left:411px;width:199px;top:27px"></div><div class="hl" style="left:0px;width:199px;top:51px"></div><div class="hl" style="left:205px;width:200px;top:51px"></div><div class="hl" style="left:411px;width:199px;top:51px"></div><div class="hl" style="left:0px;width:199px;top:75px"></div><div class="hl" style="left:205px;width:200px;top:75px"></div><div class="hl" style="left:411px;width:199px;top:75px"></div><div class="hl" style="left:0px;width:199px;top:99px"></div><div class="hl" style="left:205px;width:200px;top:99px"></div><div class="hl" style="left:411px;width:199px;top:99px"></div><div class="hl" style="left:0px;width:199px;top:123px"></div><div class="hl" style="left:205px;width:200px;top:123px"></div><div class="hl" style="left:411px;width:199px;top:123px"></div><div class="hl" style="left:0px;width:199px;top:147px"></div><div class="hl" style="left:205px;width:200px;top:147px"></div><div class="hl" style="left:411px;width:199px;top:147px"></div><div class="hl" style="left:0px;width:199px;top:171px"></div><div class="hl" style="left:205px;width:200px;top:171px"></div><div class="hl" style="left:411px;width:199px;top:171px"></div><span class="tx big" style="left:4px;top:28.6px;line-height:23px">产品编码</span><span class="tx big" style="left:104px;top:28.6px;line-height:23px">D22648</span><span class="tx big" style="left:4px;top:52.6px;line-height:23px">产品名称</span><span class="tx big" style="left:104px;top:52.6px;line-height:23px">涤纶...</span><span class="tx " style="left:4px;top:75.6px;line-height:23px">任务单总量(M)</span><span class="tx " style="left:104px;top:75.6px;line-height:23px">100000.00</span><span class="tx " style="left:4px;top:99.6px;line-height:23px">任务完成量(M)</span><span class="tx " style="left:104px;top:99.6px;line-height:23px">0</span><span class="tx " style="left:4px;top:123.6px;line-height:23px">剩余时间</span><span class="tx " style="left:104px;top:123.6px;line-height:23px">00:00:00</span><span class="tx " style="left:4px;top:147.6px;line-height:23px">当班产量(M)</span><span class="tx " style="left:104px;top:147.6px;line-height:23px">0</span><span class="tx big" style="left:4px;top:172.6px;line-height:23px">开机条数</span><span class="tx big" style="left:104px;top:172.6px;line-height:23px">0</span><span class="tx " style="left:210px;top:27.6px;line-height:23px">姓名(工号)</span><span class="tx " style="left:309px;top:27.6px;line-height:23px">--</span><span class="tx " style="left:210px;top:51.6px;line-height:23px">班次/班别</span><span class="tx " style="left:309px;top:51.6px;line-height:23px">早班/--</span><span class="tx " style="left:210px;top:75.6px;line-height:23px">上机时间</span><span class="tx " style="left:309px;top:75.6px;line-height:23px">04/08 07:10</span><span class="tx " style="left:210px;top:99.6px;line-height:23px">运行总时长</span><span class="tx " style="left:309px;top:99.6px;line-height:23px">00:00:00</span><span class="tx " style="left:210px;top:123.6px;line-height:23px">停机总时长</span><span class="tx " style="left:309px;top:123.6px;line-height:23px">00:00:00</span><span class="tx " style="left:210px;top:147.6px;line-height:23px">停机次数</span><span class="tx " style="left:309px;top:147.6px;line-height:23px">0</span><span class="tx big" style="left:210px;top:172.6px;line-height:23px">幅宽(CM)</span><span class="tx big" style="left:309px;top:172.6px;line-height:23px">300</span><span class="tx big" style="left:416px;top:28.6px;line-height:23px">机型</span><span class="tx big" style="left:515px;top:28.6px;line-height:23px">TM3-186-3...</span><span class="tx big" style="left:416px;top:52.6px;line-height:23px">密度/克重</span><span class="tx big" style="left:515px;top:52.6px;line-height:23px">26/36</span><span class="tx big" style="left:416px;top:76.6px;line-height:23px">转速</span><span class="tx big" style="left:515px;top:76.6px;line-height:23px">0</span><span class="tx " style="left:416px;top:99.6px;line-height:23px">出布速度</span><span class="tx " style="left:515px;top:99.6px;line-height:23px">0</span><span class="tx " style="left:416px;top:123.6px;line-height:23px">总米长(M)</span><span class="tx " style="left:515px;top:123.6px;line-height:23px">0</span><span class="tx " style="left:416px;top:147.6px;line-height:23px">当前布卷长(M)</span><span class="tx " style="left:515px;top:147.6px;line-height:23px">0</span><span class="tx " style="left:416px;top:171.6px;line-height:23px">本卷停机次数</span><span class="tx " style="left:515px;top:171.6px;line-height:23px">0</span></div><div class="card green" style="left:628px;top:452px;width:613px;height:197px"><div class="hd" style="height:28px"><span class="gid">G010</span><span class="st">正常 00:35</span><span class="eff">效率<i class="cl">:</i><b>92.3%</b></span></div><div class="gb g0" style="left:0px;width:200px;top:27px;height:168px"></div><div class="gb g1" style="left:205px;width:201px;top:27px;height:168px"></div><div class="gb g2" style="left:411px;width:200px;top:27px;height:168px"></div><div class="vl" style="left:99px;top:27px;height:168px"></div><div class="vl" style="left:0px;top:27px;height:168px"></div><div class="vl" style="left:199px;top:27px;height:168px"></div><div class="vl" style="left:305px;top:27px;height:168px"></div><div class="vl" style="left:205px;top:27px;height:168px"></div><div class="vl" style="left:405px;top:27px;height:168px"></div><div class="vl" style="left:511px;top:27px;height:168px"></div><div class="vl" style="left:411px;top:27px;height:168px"></div><div class="hl" style="left:0px;width:200px;top:27px"></div><div class="hl" style="left:205px;width:201px;top:27px"></div><div class="hl" style="left:411px;width:200px;top:27px"></div><div class="hl" style="left:0px;width:200px;top:51px"></div><div class="hl" style="left:205px;width:201px;top:51px"></div><div class="hl" style="left:411px;width:200px;top:51px"></div><div class="hl" style="left:0px;width:200px;top:75px"></div><div class="hl" style="left:205px;width:201px;top:75px"></div><div class="hl" style="left:411px;width:200px;top:75px"></div><div class="hl" style="left:0px;width:200px;top:99px"></div><div class="hl" style="left:205px;width:201px;top:99px"></div><div class="hl" style="left:411px;width:200px;top:99px"></div><div class="hl" style="left:0px;width:200px;top:123px"></div><div class="hl" style="left:205px;width:201px;top:123px"></div><div class="hl" style="left:411px;width:200px;top:123px"></div><div class="hl" style="left:0px;width:200px;top:147px"></div><div class="hl" style="left:205px;width:201px;top:147px"></div><div class="hl" style="left:411px;width:200px;top:147px"></div><div class="hl" style="left:0px;width:200px;top:171px"></div><div class="hl" style="left:205px;width:201px;top:171px"></div><div class="hl" style="left:411px;width:200px;top:171px"></div><span class="tx big" style="left:4px;top:28.6px;line-height:23px">产品编码</span><span class="tx big" style="left:104px;top:28.6px;line-height:23px">D22648</span><span class="tx big" style="left:4px;top:52.6px;line-height:23px">产品名称</span><span class="tx big" style="left:104px;top:52.6px;line-height:23px">涤纶...</span><span class="tx " style="left:4px;top:75.6px;line-height:23px">任务单总量(M)</span><span class="tx " style="left:104px;top:75.6px;line-height:23px">100000.00</span><span class="tx " style="left:4px;top:99.6px;line-height:23px">任务完成量(M)</span><span class="tx " style="left:104px;top:99.6px;line-height:23px">814121.35</span><span class="tx " style="left:4px;top:123.6px;line-height:23px">剩余时间</span><span class="tx " style="left:104px;top:123.6px;line-height:23px">00:00:00</span><span class="tx " style="left:4px;top:147.6px;line-height:23px">当班产量(M)</span><span class="tx " style="left:104px;top:147.6px;line-height:23px">446.85</span><span class="tx big" style="left:4px;top:172.6px;line-height:23px">开机条数</span><span class="tx big" style="left:104px;top:172.6px;line-height:23px">2</span><span class="tx " style="left:210px;top:27.6px;line-height:23px">姓名(工号)</span><span class="tx " style="left:310px;top:27.6px;line-height:23px">--</span><span class="tx " style="left:210px;top:51.6px;line-height:23px">班次/班别</span><span class="tx " style="left:310px;top:51.6px;line-height:23px">早班/--</span><span class="tx " style="left:210px;top:75.6px;line-height:23px">上机时间</span><span class="tx " style="left:310px;top:75.6px;line-height:23px">04/08 07:10</span><span class="tx " style="left:210px;top:99.6px;line-height:23px">运行总时长</span><span class="tx " style="left:310px;top:99.6px;line-height:23px">07:43:00</span><span class="tx " style="left:210px;top:123.6px;line-height:23px">停机总时长</span><span class="tx " style="left:310px;top:123.6px;line-height:23px">00:08:00</span><span class="tx " style="left:210px;top:147.6px;line-height:23px">停机次数</span><span class="tx " style="left:310px;top:147.6px;line-height:23px">3</span><span class="tx big" style="left:210px;top:172.6px;line-height:23px">幅宽(CM)</span><span class="tx big" style="left:310px;top:172.6px;line-height:23px">300</span><span class="tx big" style="left:416px;top:28.6px;line-height:23px">机型</span><span class="tx big" style="left:516px;top:28.6px;line-height:23px">TM3-186-3...</span><span class="tx big" style="left:416px;top:52.6px;line-height:23px">密度/克重</span><span class="tx big" style="left:516px;top:52.6px;line-height:23px">26/36</span><span class="tx big" style="left:416px;top:76.6px;line-height:23px">转速</span><span class="tx big" style="left:516px;top:76.6px;line-height:23px">2505</span><span class="tx " style="left:416px;top:99.6px;line-height:23px">出布速度</span><span class="tx " style="left:516px;top:99.6px;line-height:23px">57.81</span><span class="tx " style="left:416px;top:123.6px;line-height:23px">总米长(M)</span><span class="tx " style="left:516px;top:123.6px;line-height:23px">903890.35</span><span class="tx " style="left:416px;top:147.6px;line-height:23px">当前布卷长(M)</span><span class="tx " style="left:516px;top:147.6px;line-height:23px">198023.59</span><span class="tx " style="left:416px;top:171.6px;line-height:23px">本卷停机次数</span><span class="tx " style="left:516px;top:171.6px;line-height:23px">1541</span></div></div>
<div class="sb"></div><div class="sbt"></div>

</div></body></html>
